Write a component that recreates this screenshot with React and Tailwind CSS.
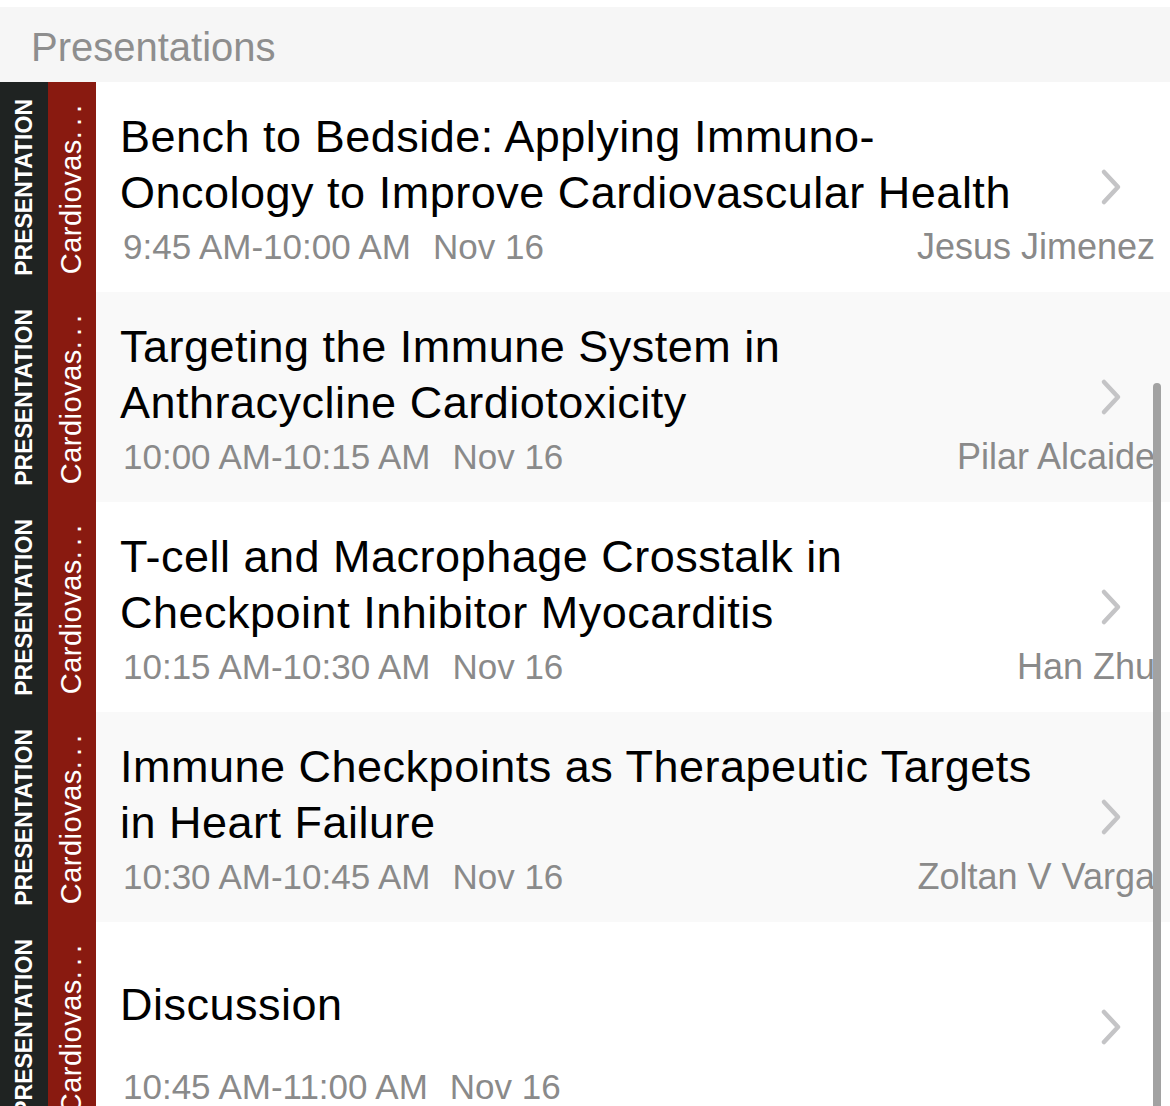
import React from "react";

const sessions = [
  {
    title: "Bench to Bedside: Applying Immuno-Oncology to Improve Cardiovascular Health",
    time: "9:45 AM-10:00 AM",
    speaker: "Jesus Jimenez",
  },
  {
    title: "Targeting the Immune System in Anthracycline Cardiotoxicity",
    time: "10:00 AM-10:15 AM",
    speaker: "Pilar Alcaide",
  },
  {
    title: "T-cell and Macrophage Crosstalk in Checkpoint Inhibitor Myocarditis",
    time: "10:15 AM-10:30 AM",
    speaker: "Han Zhu",
  },
  {
    title: "Immune Checkpoints as Therapeutic Targets in Heart Failure",
    time: "10:30 AM-10:45 AM",
    speaker: "Zoltan V Varga",
  },
  {
    title: "Discussion",
    time: "10:45 AM-11:00 AM",
    speaker: "",
  },
];

function Chevron() {
  return (
    <svg width="22" height="38" viewBox="0 0 22 38" fill="none">
      <path
        d="M4 4 L18 19 L4 34"
        stroke="#c4c4c6"
        strokeWidth="4.5"
        strokeLinecap="round"
        strokeLinejoin="round"
      />
    </svg>
  );
}

function Row({ item, shaded }) {
  return (
    <div className={`relative flex h-[210px] ${shaded ? "bg-[#f9f9f9]" : "bg-white"}`}>
      {/* type strip */}
      <div className="w-[48px] shrink-0 bg-[#1f2322] flex items-center justify-center overflow-hidden">
        <span className="[writing-mode:vertical-rl] rotate-180 text-white font-bold text-[23px] leading-none whitespace-nowrap">
          PRESENTATION
        </span>
      </div>
      {/* track strip */}
      <div className="w-[48px] shrink-0 bg-[#891a10] flex items-center justify-center overflow-hidden">
        <span className="[writing-mode:vertical-rl] rotate-180 text-white text-[29px] tracking-[0.5px] leading-none whitespace-nowrap pl-[2px]">
          Cardiovas<span className="tracking-[5px]">...</span>
        </span>
      </div>

      <div className="flex-1 pl-[24px] pt-[27px] pr-[15px]">
        <div className="h-[112px] w-[930px] flex items-center">
          <div className="text-black text-[45px] leading-[56px] tracking-[0.5px]">{item.title}</div>
        </div>
        <div className="mt-[6px] flex items-center justify-between text-[#8a8a8a] leading-[40px] whitespace-nowrap">
          <div className="pl-[3px] text-[35px]">
            <span>{item.time}</span>
            <span className="ml-[22px]">Nov 16</span>
          </div>
          <div className="text-[36px]">{item.speaker}</div>
        </div>
      </div>

      <div className="absolute right-[48px] top-1/2 -translate-y-1/2">
        <Chevron />
      </div>
    </div>
  );
}

export default function App() {
  return (
    <div className="relative w-[1170px] h-[1106px] overflow-hidden bg-white font-['Liberation_Sans',Arial,sans-serif]">
      <div className="mt-[7px] h-[75px] bg-[#f6f6f6] flex items-center pl-[31px] pt-[4px]">
        <span className="text-[40px] text-[#8e8e8e]">Presentations</span>
      </div>
      {sessions.map((s, i) => (
        <Row key={i} item={s} shaded={i % 2 === 1} />
      ))}
      {/* scroll indicator */}
      <div className="absolute left-[1153px] top-[383px] w-[8px] h-[760px] rounded-full bg-[#a2a2a2]" />
    </div>
  );
}
